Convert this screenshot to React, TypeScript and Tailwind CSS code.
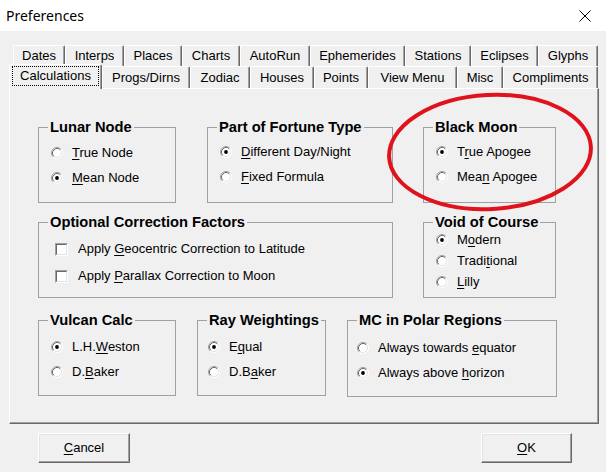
import React from "react";

type Item = { pre: string; k: string; post: string; checked?: boolean };

function Key({ pre, k, post }: { pre: string; k: string; post: string }) {
  return (
    <span className="whitespace-nowrap">
      {pre}
      <span className="underline decoration-1 underline-offset-[2px]">{k}</span>
      {post}
    </span>
  );
}

function Radio({ checked }: { checked?: boolean }) {
  return (
    <svg width="12" height="12" viewBox="0 0 12 12" className="shrink-0">
      <circle cx="6" cy="6" r="5" fill="#fff" />
      <path d="M9.89 2.11 A5.5 5.5 0 0 0 2.11 9.89" fill="none" stroke="#a0a0a0" strokeWidth="1" />
      <path d="M2.11 9.89 A5.5 5.5 0 0 0 9.89 2.11" fill="none" stroke="#ffffff" strokeWidth="1" />
      <path d="M9.18 2.82 A4.5 4.5 0 0 0 2.82 9.18" fill="none" stroke="#696969" strokeWidth="1" />
      <path d="M2.82 9.18 A4.5 4.5 0 0 0 9.18 2.82" fill="none" stroke="#e3e3e3" strokeWidth="1" />
      {checked && <circle cx="6" cy="6" r="1.9" fill="#000" />}
    </svg>
  );
}

function Check() {
  return (
    <div className="w-[13px] h-[13px] shrink-0 border border-t-[#a0a0a0] border-l-[#a0a0a0] border-r-white border-b-white">
      <div className="w-full h-full bg-white border border-t-[#696969] border-l-[#696969] border-r-[#e3e3e3] border-b-[#e3e3e3]" />
    </div>
  );
}

function Group({
  title,
  className,
  children,
}: {
  title: string;
  className: string;
  children: React.ReactNode;
}) {
  return (
    <fieldset className={"border border-[#a0a0a0] shrink-0 " + className}>
      <legend className="ml-[9px] px-[2px] font-bold text-[14.7px] leading-[16px]">{title}</legend>
      {children}
    </fieldset>
  );
}

function RadioList({ items, className }: { items: Item[]; className: string }) {
  return (
    <div className={"flex flex-col " + className}>
      {items.map((it) => (
        <div key={it.pre + it.k + it.post} className="flex items-center h-[20px]">
          <Radio checked={it.checked} />
          <span className="ml-[9px]">
            <Key pre={it.pre} k={it.k} post={it.post} />
          </span>
        </div>
      ))}
    </div>
  );
}

function Tab({ label, w, last }: { label: string; w: string; last?: boolean }) {
  return (
    <div
      className={
        "h-full flex items-center justify-center border-t border-l border-r border-t-white border-l-white border-r-[#696969] rounded-t-[2px] shadow-[inset_-1px_0_0_#a0a0a0] " +
        w +
        (last ? "" : "")
      }
    >
      {label}
    </div>
  );
}

function Button({ children, className }: { children: React.ReactNode; className: string }) {
  return (
    <div
      className={
        "h-[30px] flex items-center justify-center border border-t-white border-l-white border-r-[#696969] border-b-[#696969] shadow-[inset_-1px_-1px_0_#a0a0a0,inset_1px_1px_0_#e3e3e3] " +
        className
      }
    >
      {children}
    </div>
  );
}

export default function App() {
  return (
    <div className="relative w-[606px] h-[472px] overflow-hidden bg-[#f0f0f0] text-black text-[13px] leading-[16px] font-['Liberation_Sans',Arial,sans-serif]">
      {/* window caption */}
      <div className="h-[31px] bg-white flex items-center justify-between pl-[6px] pr-[15px]">
        <span className="font-['Noto_Sans','Open_Sans',sans-serif] text-[14px] text-black">Preferences</span>
        <svg width="12" height="12" viewBox="0 0 12 12">
          <path d="M0.5 0.5 L11.5 11.5 M11.5 0.5 L0.5 11.5" stroke="#000" strokeWidth="1" />
        </svg>
      </div>

      {/* tab strip: back row */}
      <div className="mt-[14px] ml-[13px] flex h-[21px]">
        <Tab label="Dates" w="w-[52px]" />
        <Tab label="Interps" w="w-[59px]" />
        <Tab label="Places" w="w-[58px]" />
        <Tab label="Charts" w="w-[58px]" />
        <Tab label="AutoRun" w="w-[70px]" />
        <Tab label="Ephemerides" w="w-[95px]" />
        <Tab label="Stations" w="w-[66px]" />
        <Tab label="Eclipses" w="w-[67px]" />
        <Tab label="Glyphs" w="w-[60px]" />
      </div>

      {/* tab strip: front row */}
      <div className="relative z-10 ml-[9px] flex items-end h-[22px]">
        <div className="relative top-px w-[93px] h-[25px] bg-[#f0f0f0] border-t border-l border-r border-t-white border-l-white border-r-[#696969] rounded-t-[2px] shadow-[inset_-1px_0_0_#a0a0a0] px-[2px] pt-[1px] pb-[2px]">
          <div className="h-[20px] border border-dotted border-black flex items-center justify-center">
            Calculations
          </div>
        </div>
        <Tab label="Progs/Dirns" w="w-[88px]" />
        <Tab label="Zodiac" w="w-[60px]" />
        <Tab label="Houses" w="w-[64px]" />
        <Tab label="Points" w="w-[54px]" />
        <Tab label="View Menu" w="w-[89px]" />
        <Tab label="Misc" w="w-[46px]" />
        <Tab label="Compliments" w="w-[95px]" />
      </div>

      {/* tab page */}
      <div className="ml-[9px] w-[590px] h-[336px] border border-t-white border-l-white border-r-[#696969] border-b-[#696969] shadow-[inset_-1px_-1px_0_#a0a0a0] pt-[30px] pl-[28px]">
        <div className="flex items-start">
          <Group title="Lunar Node" className="w-[138px] h-[84px]">
            <RadioList
              className="pl-[12px] pt-[8px] gap-[5px]"
              items={[
                { pre: "", k: "T", post: "rue Node" },
                { pre: "", k: "M", post: "ean Node", checked: true },
              ]}
            />
          </Group>
          <Group title="Part of Fortune Type" className="ml-[31px] w-[186px] h-[84px]">
            <RadioList
              className="pl-[12px] pt-[7px] gap-[5px]"
              items={[
                { pre: "", k: "D", post: "ifferent Day/Night", checked: true },
                { pre: "", k: "F", post: "ixed Formula" },
              ]}
            />
          </Group>
          <Group title="Black Moon" className="ml-[30px] w-[133px] h-[84px]">
            <RadioList
              className="pl-[12px] pt-[7px] gap-[5px]"
              items={[
                { pre: "T", k: "r", post: "ue Apogee", checked: true },
                { pre: "Mea", k: "n", post: " Apogee" },
              ]}
            />
          </Group>
        </div>

        <div className="flex items-start mt-[11px]">
          <Group title="Optional Correction Factors" className="w-[355px] h-[84px]">
            <div className="flex flex-col pl-[16px] pt-[9px] gap-[7px]">
              <div className="flex items-center h-[20px]">
                <Check />
                <span className="ml-[10px]">
                  <Key pre="Apply " k="G" post="eocentric Correction to Latitude" />
                </span>
              </div>
              <div className="flex items-center h-[20px]">
                <Check />
                <span className="ml-[10px]">
                  <Key pre="Apply " k="P" post="arallax Correction to Moon" />
                </span>
              </div>
            </div>
          </Group>
          <Group title="Void of Course" className="ml-[30px] w-[133px] h-[84px]">
            <RadioList
              className="pl-[12px] pt-[0px] gap-[1px]"
              items={[
                { pre: "M", k: "o", post: "dern", checked: true },
                { pre: "Tradi", k: "t", post: "ional" },
                { pre: "", k: "L", post: "illy" },
              ]}
            />
          </Group>
        </div>

        <div className="flex items-start mt-[14px]">
          <Group title="Vulcan Calc" className="w-[138px] h-[84px]">
            <RadioList
              className="pl-[12px] pt-[9px] gap-[5px]"
              items={[
                { pre: "L.H.", k: "W", post: "eston", checked: true },
                { pre: "D.", k: "B", post: "aker" },
              ]}
            />
          </Group>
          <Group title="Ray Weightings" className="ml-[21px] w-[129px] h-[84px]">
            <RadioList
              className="pl-[10px] pt-[9px] gap-[5px]"
              items={[
                { pre: "E", k: "q", post: "ual", checked: true },
                { pre: "D.B", k: "a", post: "ker" },
              ]}
            />
          </Group>
          <Group title="MC in Polar Regions" className="ml-[21px] w-[210px] h-[85px]">
            <RadioList
              className="pl-[9px] pt-[10px] gap-[5px]"
              items={[
                { pre: "Always towards ", k: "e", post: "quator" },
                { pre: "Always above ", k: "h", post: "orizon", checked: true },
              ]}
            />
          </Group>
        </div>
      </div>

      {/* dialog buttons */}
      <div className="flex mt-[9px]">
        <Button className="ml-[38px] w-[92px]">
          <Key pre="" k="C" post="ancel" />
        </Button>
        <Button className="ml-[351px] w-[91px]">
          <Key pre="" k="O" post="K" />
        </Button>
      </div>

      {/* red marker ellipse drawn over the dialog */}
      <svg className="absolute inset-0 pointer-events-none" width="606" height="472" viewBox="0 0 606 472">
        <ellipse
          cx="490"
          cy="152"
          rx="101"
          ry="57"
          transform="rotate(-3 490 152)"
          fill="none"
          stroke="#e0131c"
          strokeWidth="4"
        />
      </svg>
    </div>
  );
}
